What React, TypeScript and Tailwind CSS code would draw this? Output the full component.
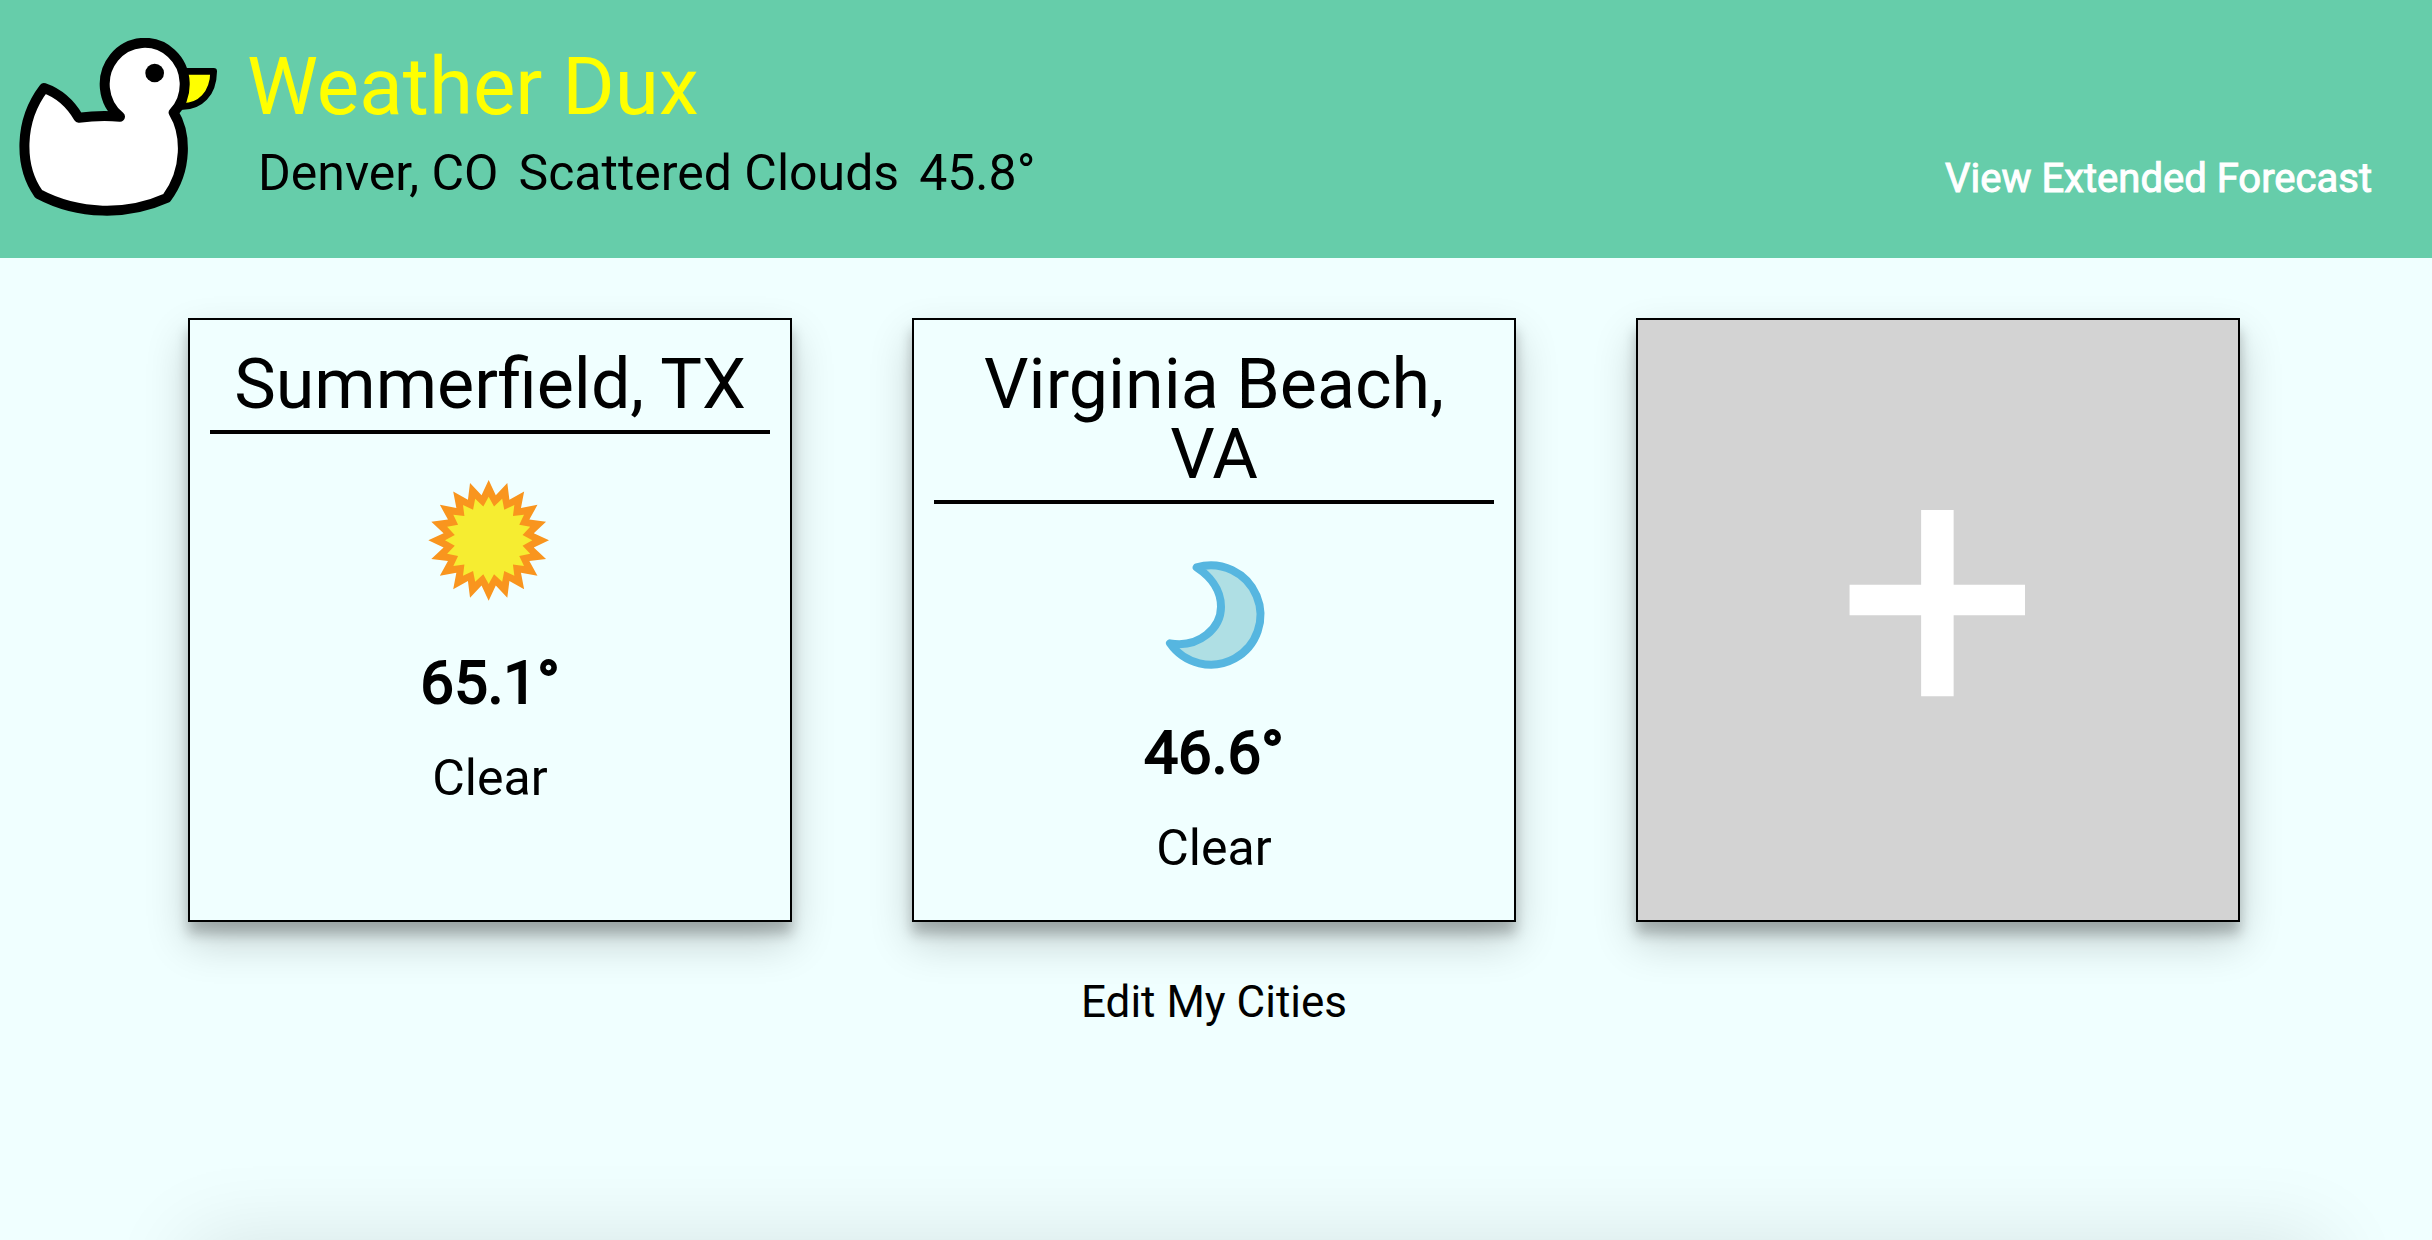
const cities = [
  { name: "Summerfield, TX", icon: "sun", temp: "65.1°", sky: "Clear" },
  { name: "Virginia Beach, VA", icon: "moon", temp: "46.6°", sky: "Clear" },
];

function Duck() {
  return (
    <svg viewBox="57 114 600 534" className="h-[178px] w-[200px] shrink-0" role="img" aria-label="Duck logo">
      <path d="M550 214H641C640 282 600 321 545 319Z" fill="#ffff00" stroke="#000" strokeWidth="20" strokeLinejoin="round" />
      <path
        d="M360 350A120 124 0 1 1 521 338C559 400 563 510 500 594C380 648 235 645 116 582C58 500 55 365 132 264C175 279 212 312 236 353Q300 345 360 350Z"
        fill="#fff"
        stroke="#000"
        strokeWidth="30"
        strokeLinejoin="round"
      />
      <circle cx="464" cy="219" r="28" />
    </svg>
  );
}

function star(cx: number, cy: number, outer: number, inner: number) {
  return Array.from({ length: 40 }, (_, i) => {
    const r = i % 2 ? inner : outer;
    const a = (i * Math.PI) / 20;
    return `${(cx + r * Math.sin(a)).toFixed(1)},${(cy - r * Math.cos(a)).toFixed(1)}`;
  }).join(" ");
}

function WeatherIcon({ kind }: { kind: string }) {
  if (kind === "sun") {
    return (
      <svg viewBox="48 53 384 384" className="size-32" role="img" aria-label="Sun">
        <polygon points={star(236, 243, 181, 137)} fill="#f9951e" />
        <polygon points={star(236, 243, 131, 103)} fill="#f6ed31" />
      </svg>
    );
  }
  return (
    <svg viewBox="30 21 384 384" className="size-32" role="img" aria-label="Moon">
      <path
        d="M170 82A149 149 0 1 1 90 310C180 325 243 262 243 200C243 145 205 105 170 82Z"
        fill="#afdfe4"
        stroke="#56b6e0"
        strokeWidth="24"
        strokeLinejoin="round"
      />
    </svg>
  );
}

const cardClass =
  "size-[604px] border-2 border-black shadow-[0_20px_40px_rgba(0,0,0,0.19),0_12px_12px_rgba(0,0,0,0.23)]";

export default function App() {
  return (
    <div className="min-h-screen bg-[#f0ffff] font-[Roboto,sans-serif] text-black">
      <header className="flex items-end bg-[#66cdaa] pt-[38px] pr-[60px] pb-[42px] pl-[19px]">
        <Duck />
        <div className="ml-7 flex flex-col gap-[21px] pb-[18px]">
          <h1 className="text-[80px] leading-none text-[#ffff00]">Weather Dux</h1>
          <div className="flex gap-5 pl-[11px] text-[50px] leading-none">
            <span>Denver, CO</span>
            <span>Scattered Clouds</span>
            <span>45.8°</span>
          </div>
        </div>
        <a href="#forecast" className="ml-auto pb-[17px] text-[40px] leading-none text-white [-webkit-text-stroke:1px_#fff]">
          View Extended Forecast
        </a>
      </header>
      <main className="flex flex-col items-center pt-[60px] pr-1">
        <div className="flex flex-wrap justify-center gap-[120px]">
          {cities.map((c) => (
            <article key={c.name} className={`${cardClass} flex flex-col items-center px-5 pt-[29px] text-center`}>
              <h2 className="w-full border-b-4 border-black pb-[11px] text-[70px] leading-none">{c.name}</h2>
              <div className="mt-[43px]">
                <WeatherIcon kind={c.icon} />
              </div>
              <p className="mt-[48px] text-[60px] leading-none [-webkit-text-stroke:2px_#000]">{c.temp}</p>
              <p className="mt-[40px] text-[50px] leading-none">{c.sky}</p>
            </article>
          ))}
          <button
            type="button"
            aria-label="Add city"
            className={`${cardClass} flex items-center justify-center bg-[#d3d3d3] pb-[42px] text-[360px] leading-none text-white`}
          >
            +
          </button>
        </div>
        <button type="button" className="mt-[58px] text-[44px] leading-none">
          Edit My Cities
        </button>
      </main>
      <aside
        aria-hidden="true"
        className="fixed top-full right-[108px] left-[190px] h-96 bg-[#f0ffff] shadow-[0_0_80px_rgba(0,0,0,0.11)]"
      />
    </div>
  );
}
